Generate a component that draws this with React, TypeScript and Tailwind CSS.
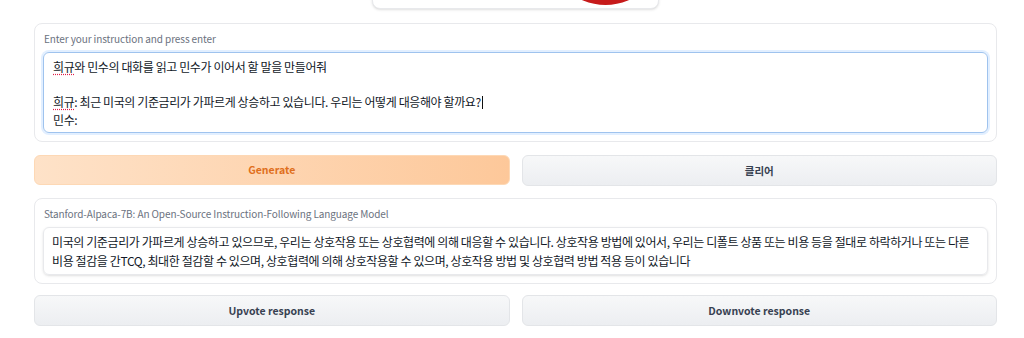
const font = { fontFamily: '"Noto Sans CJK KR", "Noto Sans", sans-serif' };

function Card({ label, children }: { label: string; children: React.ReactNode }) {
  return (
    <div className="rounded-lg border border-[#e8e9ec] bg-white px-2 pt-[8px] pb-[8px]">
      <div className="mb-[6px] pl-px text-[10px] leading-[14px] tracking-[-0.1px] text-[#6b7280]">{label}</div>
      {children}
    </div>
  );
}

function Button({ children, primary }: { children: React.ReactNode; primary?: boolean }) {
  return (
    <button
      type="button"
      className={
        primary
          ? "h-[30px] flex-1 rounded-md border border-[#fdd8b5] bg-gradient-to-r from-[#fee2c8] to-[#fdc89a] text-[10.5px] font-semibold text-[#e06f1c]"
          : "h-[31px] flex-1 rounded-md border border-[#e3e5e8] bg-gradient-to-b from-[#f7f8f9] to-[#eceef1] text-[10.5px] font-semibold text-[#374151]"
      }
    >
      {children}
    </button>
  );
}

export default function App() {
  return (
    <div className="min-h-[338px] w-[1024px] overflow-hidden bg-white" style={font}>
      <div className="relative ml-[372px] mt-[-40px] h-[49px] w-[287px] overflow-hidden rounded-lg border border-[#e8e9ec] bg-white shadow-sm">
        <div className="absolute left-[174px] top-[-73px] h-[117px] w-[117px] rounded-full bg-[#c61a1a]" />
      </div>

      <div className="ml-[34px] mt-[14px] flex w-[963px] flex-col gap-[12px]">
        <Card label="Enter your instruction and press enter">
          <div className="h-[81px] rounded-md border border-[#9fc3ee] px-[9px] pt-[5px] text-[12px] leading-[17.5px] tracking-[-0.4px] text-[#111827] shadow-[0_0_0_2px_rgba(191,219,254,0.45)]">
            <div>
              <span className="underline decoration-[#e11d48] decoration-dotted underline-offset-2">희규</span>와 민수의 대화를 읽고 민수가 이어서 할 말을 만들어줘
            </div>
            <div>&nbsp;</div>
            <div>
              <span className="underline decoration-[#e11d48] decoration-dotted underline-offset-2">희규</span>: 최근 미국의 기준금리가 가파르게 상승하고 있습니다. 우리는 어떻게 대응해야 할까요?
              <span className="ml-px inline-block h-[13px] w-px translate-y-[2px] bg-[#111]" />
            </div>
            <div>민수:</div>
          </div>
        </Card>

        <div className="flex gap-[12px] pt-px">
          <Button primary>Generate</Button>
          <Button>클리어</Button>
        </div>

        <Card label="Stanford-Alpaca-7B: An Open-Source Instruction-Following Language Model">
          <div className="rounded-md border border-[#e8e9ec] px-[8px] py-[4px] text-[12px] leading-[19px] tracking-[-0.4px] text-[#111827] shadow-sm">
            미국의 기준금리가 가파르게 상승하고 있으므로, 우리는 상호작용 또는 상호협력에 의해 대응할 수 있습니다. 상호작용 방법에 있어서, 우리는 디폴트 상품 또는 비용 등을 절대로 하락하거나 또는 다른 비용 절감을 간TCQ, 최대한 절감할 수 있으며, 상호협력에 의해 상호작용할 수 있으며, 상호작용 방법 및 상호협력 방법 적용 등이 있습니다
          </div>
        </Card>

        <div className="-mt-px flex gap-[12px]">
          <Button>Upvote response</Button>
          <Button>Downvote response</Button>
        </div>
      </div>
    </div>
  );
}
